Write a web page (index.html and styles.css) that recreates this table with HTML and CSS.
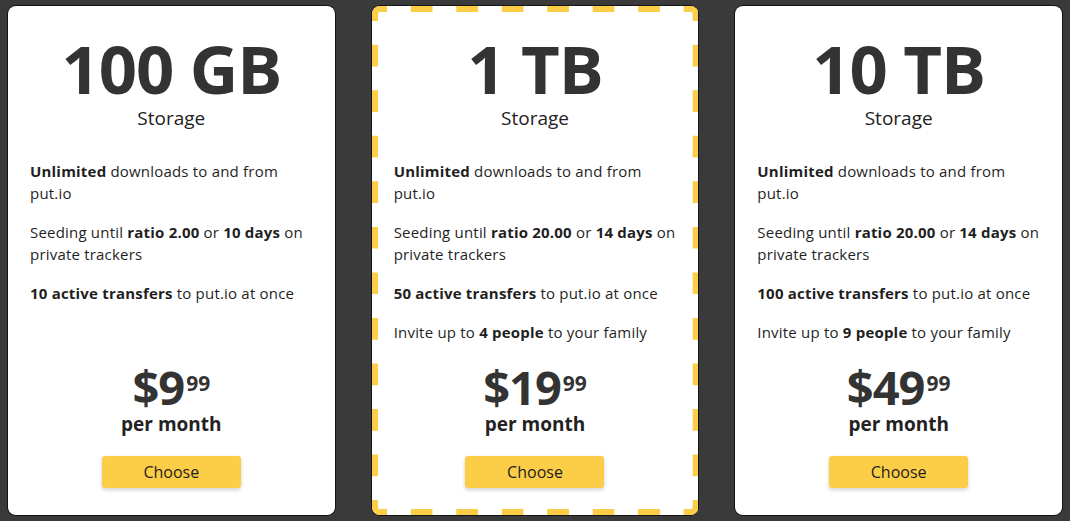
FILE: index.html
```html
<!DOCTYPE html>
<html lang="en">
<head>
<meta charset="utf-8">
<title>put.io plans</title>
<link rel="stylesheet" href="styles.css">
</head>
<body>
<main class="plans">
  <section class="plan">
    <header class="plan-head">
      <h2 class="plan-size">100 GB</h2>
      <p class="plan-label">Storage</p>
    </header>
    <ul class="features">
      <li><b>Unlimited</b> downloads to and from put.io</li>
      <li>Seeding until <b>ratio 2.00</b> or <b>10 days</b> on private trackers</li>
      <li><b>10 active transfers</b> to put.io at once</li>
    </ul>
    <div class="price"><span class="amount">$9</span><span class="cents">99</span></div>
    <p class="period">per month</p>
    <button class="choose" type="button">Choose</button>
  </section>
  <section class="plan plan-featured">
    <svg class="dash-frame" viewBox="0 0 327 509" preserveAspectRatio="none" aria-hidden="true">
      <path pathLength="308" d="M4.46 4.46 A5 5 0 0 1 8 3 H319 A5 5 0 0 1 322.54 4.46"/>
      <path pathLength="484" d="M322.54 4.46 A5 5 0 0 1 324 8 V501 A5 5 0 0 1 322.54 504.54"/>
      <path pathLength="308" d="M322.54 504.54 A5 5 0 0 1 319 506 H8 A5 5 0 0 1 4.46 504.54"/>
      <path pathLength="484" d="M4.46 504.54 A5 5 0 0 1 3 501 V8 A5 5 0 0 1 4.46 4.46"/>
    </svg>
    <header class="plan-head">
      <h2 class="plan-size">1 TB</h2>
      <p class="plan-label">Storage</p>
    </header>
    <ul class="features">
      <li><b>Unlimited</b> downloads to and from put.io</li>
      <li>Seeding until <b>ratio 20.00</b> or <b>14 days</b> on private trackers</li>
      <li><b>50 active transfers</b> to put.io at once</li>
      <li>Invite up to <b>4 people</b> to your family</li>
    </ul>
    <div class="price"><span class="amount">$19</span><span class="cents">99</span></div>
    <p class="period">per month</p>
    <button class="choose" type="button">Choose</button>
  </section>
  <section class="plan">
    <header class="plan-head">
      <h2 class="plan-size">10 TB</h2>
      <p class="plan-label">Storage</p>
    </header>
    <ul class="features">
      <li><b>Unlimited</b> downloads to and from put.io</li>
      <li>Seeding until <b>ratio 20.00</b> or <b>14 days</b> on private trackers</li>
      <li><b>100 active transfers</b> to put.io at once</li>
      <li>Invite up to <b>9 people</b> to your family</li>
    </ul>
    <div class="price"><span class="amount">$49</span><span class="cents">99</span></div>
    <p class="period">per month</p>
    <button class="choose" type="button">Choose</button>
  </section>
</main>
</body>
</html>
```

FILE: styles.css
```css
html, body {
  margin: 0;
  padding: 0;
}

body {
  background: #3a3a3a;
  font-family: "Open Sans", "DejaVu Sans", sans-serif;
  color: #1f1f1f;
}

.plans {
  display: grid;
  grid-template-columns: repeat(3, 1fr);
  gap: 37px;
  padding: 6px 8px;
  height: 521px;
  box-sizing: border-box;
}

.plan {
  position: relative;
  background: #fff;
  border-radius: 8px;
  box-shadow: 0 0 0 1px #141414;
  display: flex;
  flex-direction: column;
  padding: 29px 22px 27px;
  min-width: 0;
}

.dash-frame {
  position: absolute;
  top: 0;
  left: 0;
  width: 100%;
  height: 100%;
  pointer-events: none;
  fill: none;
  stroke: #fccd46;
  stroke-width: 6;
  stroke-dasharray: 21 23;
  stroke-dashoffset: 10.5;
}

.plan-head {
  text-align: center;
}

.plan-size {
  margin: 0;
  font-size: 67px;
  line-height: 67px;
  font-weight: 700;
  color: #333;
  letter-spacing: -1px;
}

.plan-label {
  margin: 7px 0 0;
  font-size: 19px;
  line-height: 19px;
  color: #222;
}

.features {
  list-style: none;
  margin: 32px 0 0;
  padding: 0;
  flex: 1;
  font-size: 15px;
  line-height: 22px;
  letter-spacing: 0.2px;
}

.features li + li {
  margin-top: 17px;
}

.features b {
  font-weight: 700;
}

.price {
  display: flex;
  justify-content: center;
  align-items: flex-start;
  font-size: 47px;
  line-height: 45px;
  font-weight: 700;
  color: #333;
  letter-spacing: -1px;
}

.cents {
  font-size: 21px;
  line-height: 20px;
  margin: 8px 0 0 2px;
  letter-spacing: 0;
}

.period {
  margin: 5px 0 0;
  font-size: 19px;
  line-height: 19px;
  font-weight: 700;
  text-align: center;
  color: #222;
}

.choose {
  align-self: center;
  margin-top: 22px;
  width: 139px;
  height: 32px;
  border: 0;
  border-radius: 3px;
  background: #fccd46;
  font-family: "Open Sans", "DejaVu Sans", sans-serif;
  font-size: 16px;
  color: #1d1d1d;
  box-shadow: 0 2px 4px rgba(0, 0, 0, 0.18);
  cursor: pointer;
}
```
